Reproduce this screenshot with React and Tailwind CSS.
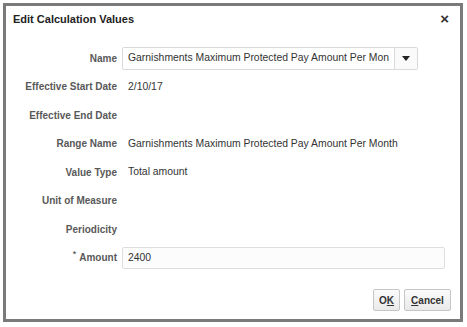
export default function App() {
  const rows = [
    { label: "Effective Start Date", value: "2/10/17" },
    { label: "Effective End Date", value: "" },
    { label: "Range Name", value: "Garnishments Maximum Protected Pay Amount Per Month" },
    { label: "Value Type", value: "Total amount" },
    { label: "Unit of Measure", value: "" },
    { label: "Periodicity", value: "" },
  ];
  return (
    <div className="w-[467px] h-[327px] bg-white pt-[3px] pl-[3px]" style={{ fontFamily: '"Liberation Sans", Arial, sans-serif' }}>
      <div className="w-[460px] h-[319px] border-[3px] border-[#7a7a7a] bg-white flex flex-col">
        <div className="flex items-start justify-between h-[38px] pl-[7px] pr-[11px] pt-[5px]">
          <span className="text-[11px] leading-[16px] font-bold text-[#222]">Edit Calculation Values</span>
          <span className="text-[15px] leading-[16px] font-bold text-[#333]">×</span>
        </div>
        <div className="flex flex-col">
          <div className="flex items-center h-[28.5px]">
            <div className="w-[111px] text-right text-[10px] font-bold text-[#595959]">Name</div>
            <div className="ml-[5px] w-[296px] h-[23px] flex border border-[#d9d9d9] rounded-[2px] bg-white">
              <div className="flex-1 flex items-center pl-[5px] text-[10.4px] text-[#333] overflow-hidden whitespace-nowrap">
                Garnishments Maximum Protected Pay Amount Per Mon
              </div>
              <div className="w-[23px] border-l border-[#d9d9d9] flex items-center justify-center bg-[#fafafa]">
                <svg width="8" height="5" viewBox="0 0 8 5"><path d="M0 0h8L4 5z" fill="#222" /></svg>
              </div>
            </div>
          </div>
          {rows.map((r) => (
            <div key={r.label} className="flex items-center h-[28.5px]">
              <div className="w-[111px] text-right text-[10px] font-bold text-[#595959]">{r.label}</div>
              <div className="ml-[11px] text-[10.4px] text-[#333] whitespace-nowrap">{r.value}</div>
            </div>
          ))}
          <div className="flex items-center h-[28.5px]">
            <div className="w-[111px] text-right text-[10px] font-bold text-[#595959]">
              <sup className="text-[9px] font-normal text-[#333] mr-[3px]">*</sup>Amount
            </div>
            <div className="ml-[5px] w-[323px] h-[22px] flex items-center pl-[5px] border border-[#dedede] rounded-[2px] bg-[#fcfcfc] text-[10.4px] text-[#333]">
              2400
            </div>
          </div>
        </div>
        <div className="flex justify-end gap-[4px] pr-[9px] mt-[17px]">
          <button className="w-[27px] h-[22px] border border-[#c6c6c6] rounded-[2px] bg-gradient-to-b from-[#fbfbfb] to-[#e9e9e9] text-[10px] font-bold text-[#333]">
            O<span className="underline">K</span>
          </button>
          <button className="w-[47px] h-[22px] border border-[#c6c6c6] rounded-[2px] bg-gradient-to-b from-[#fbfbfb] to-[#e9e9e9] text-[10px] font-bold text-[#333]">
            <span className="underline">C</span>ancel
          </button>
        </div>
      </div>
    </div>
  );
}
